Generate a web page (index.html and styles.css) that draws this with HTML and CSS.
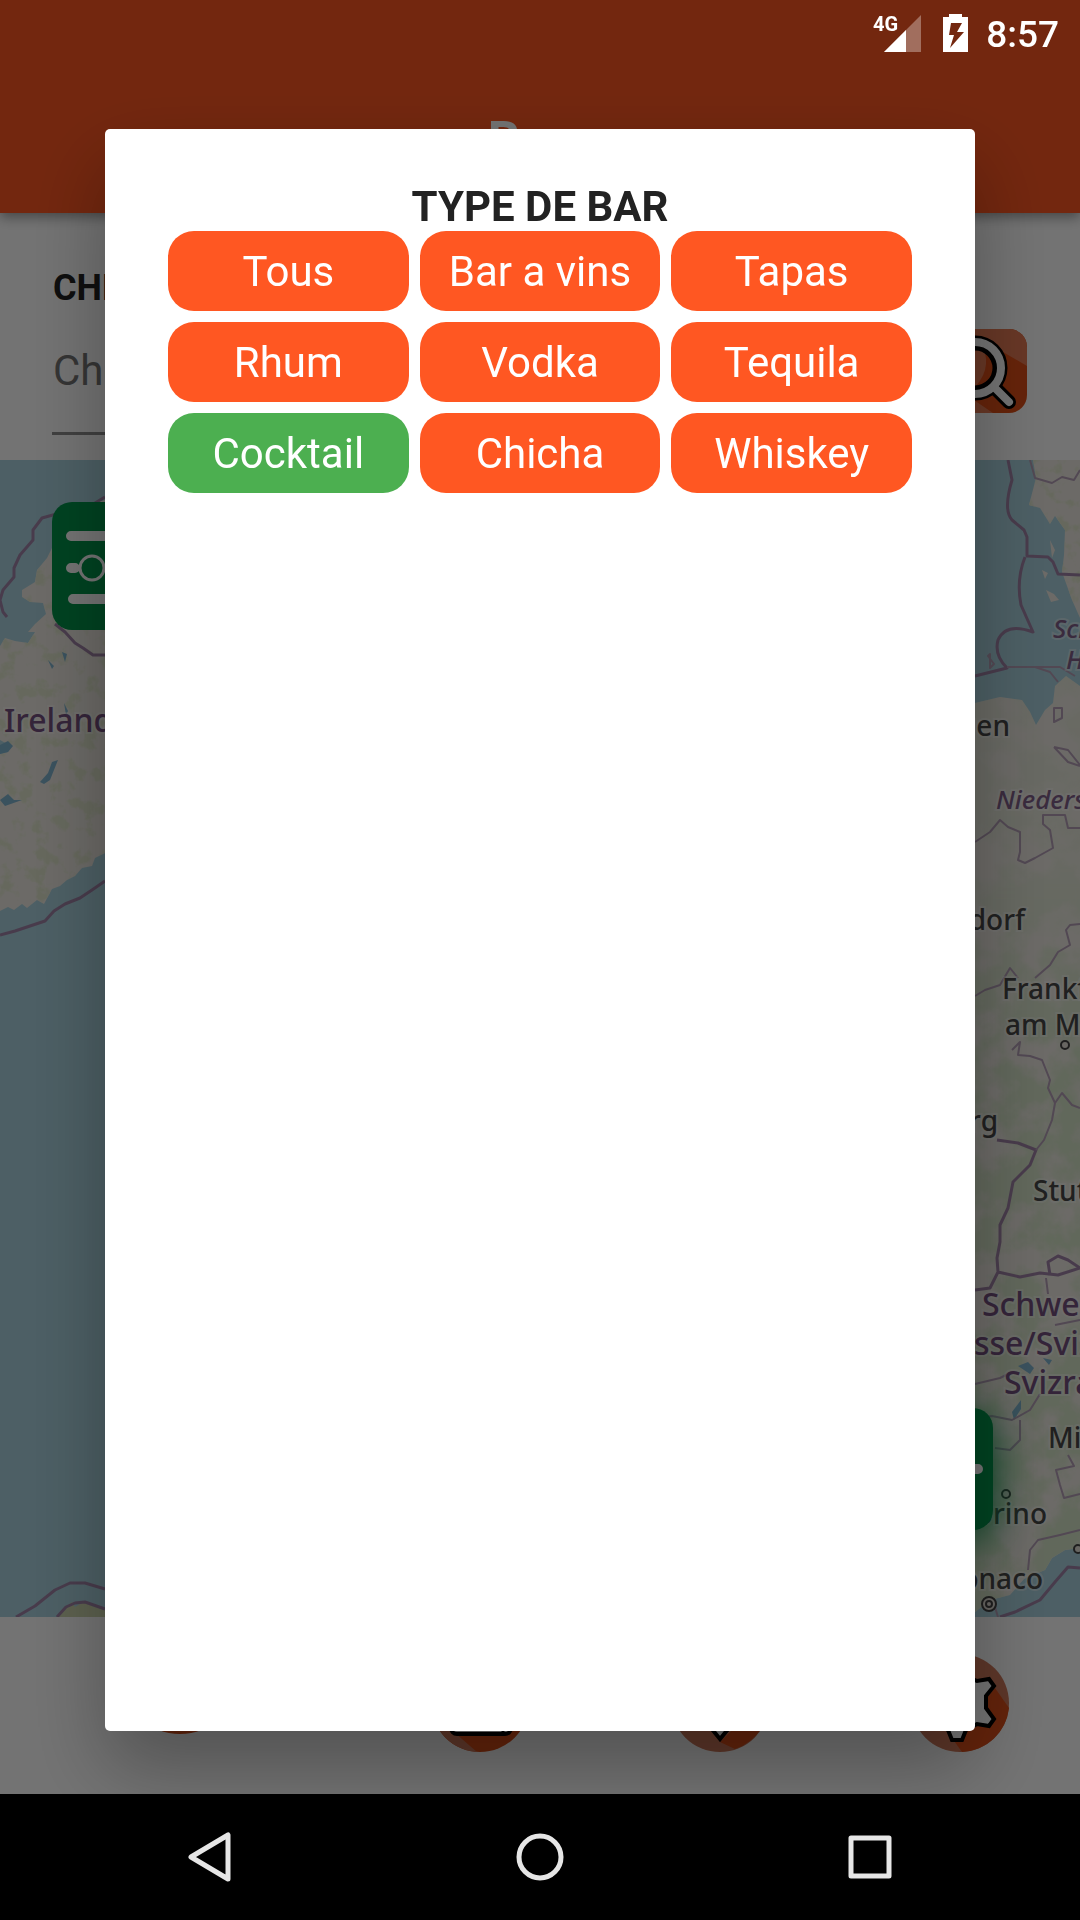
FILE: index.html
```html
<!DOCTYPE html>
<html lang="fr">
<head>
  <meta charset="utf-8">
  <meta name="viewport" content="width=device-width, initial-scale=1">
  <title>Bars</title>
  <link rel="stylesheet" href="styles.css">
</head>
<body>
  <div class="status-bar">
    <div class="signal">
      <span class="network">4G</span>
      <svg class="signal-icon" viewBox="0 0 37 37" aria-hidden="true">
        <path d="M37 0V37H0Z" fill="#fff" fill-opacity=".33"/>
        <path d="M22 15V37H0Z" fill="#fff"/>
      </svg>
    </div>
    <svg class="battery" viewBox="0 0 25 38" aria-hidden="true">
      <path fill="#fff" fill-rule="evenodd" d="M6 0H19V3H25V38H0V3H6ZM8 9L6 21H11L7 34L21 18H14L19 9Z"/>
    </svg>
    <time class="clock">8:57</time>
  </div>

  <div class="app">
    <header class="app-bar"><h1 class="app-title">Bars</h1></header>

    <form class="search">
      <div class="search-field">
        <label class="search-label" for="query">CHERCHER</label>
        <input class="search-input" id="query" type="text" placeholder="Chercher un bar">
      </div>
      <button class="search-button" type="button" aria-label="Rechercher">
        <svg viewBox="0 0 84 84" aria-hidden="true">
          <rect width="84" height="84" rx="18" fill="#e04f17"/>
          <path d="M0 18A18 18 0 0 1 18 0H66A18 18 0 0 1 84 18V37L0 -12Z" fill="#e57b55"/>
          <path d="M0 18L40 18Q50 42 28 62L0 84Z" fill="#e57b55"/>
          <path d="M18 84A18 18 0 0 1 0 66V50L50 84Z" fill="#e57b55"/>
          <g fill="none" stroke-linecap="round">
            <circle cx="32" cy="39" r="25" stroke="#000" stroke-width="15"/>
            <path d="M51 58L66 73" stroke="#000" stroke-width="14"/>
            <circle cx="32" cy="39" r="26" stroke="#fff" stroke-width="8"/>
            <path d="M51 58L66 73" stroke="#fff" stroke-width="8"/>
          </g>
        </svg>
      </button>
    </form>

    <main class="map">
      <svg class="map-canvas" viewBox="0 460 1080 1157" preserveAspectRatio="xMidYMid slice" role="img" aria-label="Carte">
        <defs>
          <filter id="woods" x="0" y="0" width="1" height="1">
            <feTurbulence type="fractalNoise" baseFrequency=".024" numOctaves="5" seed="8"/>
            <feColorMatrix values="0 0 0 0 .69  0 0 0 0 .79  0 0 0 0 .6  4 0 0 0 -1.4"/>
            <feComposite in2="SourceGraphic" operator="in"/>
          </filter>
          <filter id="meadows" x="0" y="0" width="1" height="1">
            <feTurbulence type="fractalNoise" baseFrequency=".06" numOctaves="4" seed="3"/>
            <feColorMatrix values="0 0 0 0 .76  0 0 0 0 .8  0 0 0 0 .62  6 0 0 0 -3.2"/>
            <feComposite in2="SourceGraphic" operator="in"/>
          </filter>
          <linearGradient id="relief" x1="0" y1="0" x2="0" y2="1">
            <stop offset="0" stop-color="#fff" stop-opacity=".3"/>
            <stop offset=".2" stop-color="#fff" stop-opacity=".4"/>
            <stop offset=".4" stop-color="#fff"/>
          </linearGradient>
          <path id="ireland" d="M105 500L60 510L52 548L47 558L37 570L35 582L22 590V597L30 602L43 603L46 614L35 624L28 632H35L28 643L15 641L5 638L0 646V740L11 746L8 752L0 754V911L8 907L14 910L22 904L27 908L37 900L44 904L52 889L60 886L67 880L75 876L82 868L92 866L95 858L105 853Z"/>
          <path id="denmark" d="M1033 460L1036 478L1029 505L1040 508L1050 524L1055 516L1065 530L1064 555L1062 572L1072 600L1080 618V460Z"/>
          <path id="continent" d="M940 710L975 703L1000 697L1022 700L1030 712L1036 725L1045 710L1053 703L1055 686L1066 676L1080 686V1548L1065 1550L1052 1558L1045 1570L1025 1578L1010 1595L990 1600L975 1612L960 1617H900V710Z"/>
        </defs>
        <rect y="460" width="1080" height="1157" fill="#aad3df"/>
        <g fill="#efebe4">
          <use href="#ireland"/>
          <use href="#denmark"/>
          <use href="#continent"/>
          <path d="M1046 590l8 4 5 6-8 2zM1042 570l6 3-3 6zM1050 540l5 10-3 8z"/>
        </g>
        <use href="#ireland" filter="url(#meadows)"/>
        <use href="#denmark" filter="url(#meadows)"/>
        <use href="#continent" fill="url(#relief)" filter="url(#woods)"/>
        <path d="M57 1617L62 1610L66 1607L72 1602L75 1607L85 1601L92 1606L105 1610V1617Z" fill="#cdd6ae"/>
        <g fill="#82b5d0">
          <path d="M0 745L8 741L13 746L8 752L0 754ZM0 800L8 794L14 800L22 800L5 806ZM40 782L48 773L52 762L58 760L54 770L50 780L44 784ZM62 652l5 2-2 8zM48 660l6 6-2 3zM64 703l4 8-2 4z"/>
          <path d="M1018 1366L1028 1362L1034 1368L1030 1374ZM1043 1358l9 2-3 5zM1012 1412L1021 1400V1409L1014 1420Z"/>
        </g>
        <g fill="none" stroke="#a184a8" stroke-width="3" stroke-linejoin="round">
          <path d="M105 497L90 506L60 513L42 518L33 530V540L20 555L14 568V577L3 590L0 600L3 612L7 617"/>
          <path d="M55 624L65 632L75 643L83 648L93 655H105M0 935L15 931L30 926L45 921L54 911L65 904L80 898L92 890L105 881"/>
          <path d="M16 1617L35 1606L55 1590L70 1583H85L105 1589M57 1617L66 1607L75 1603L85 1602L105 1609"/>
          <path d="M1008 460L1012 480Q1003 510 1012 520L1024 530L1027 537V556L1048 557L1053 562L1058 574L1080 575M1025 557Q1016 580 1021 605L1033 632Q1006 622 998 640Q994 655 1007 668L975 676"/>
          <path d="M997 1140L1018 1143L1036 1150L1030 1165L1013 1182L1008 1208L1000 1225V1242L997 1258L998 1272L1020 1277L1040 1273L1058 1275L1080 1268M998 1272L990 1288L975 1290"/>
          <path d="M1050 1275L1048 1262L1058 1256L1068 1260L1080 1268M1080 1568L1068 1567L1055 1582L1040 1600L1015 1612L1000 1617"/>
        </g>
        <g fill="none" stroke="#b5a0b8" stroke-width="2" stroke-linejoin="round">
          <path d="M1030 460L1035 478L1052 483L1062 477L1074 480L1080 470M1007 667H1060L1075 676M1035 667L1050 672L1058 682M988 656L994 664L990 668V654Z"/>
          <path d="M975 842L990 832L1000 820L1008 827L1020 832V852L1018 860L1025 863L1035 858L1053 848L1050 830L1043 824V815L1065 815L1068 828H1080M1054 708H1062V718L1054 722ZM1054 747L1068 750L1080 765M1054 747L1068 762L1080 766"/>
          <path d="M975 996L985 990L1000 985L1010 968L1018 978M1035 978L1050 965L1058 952L1070 945L1066 930L1070 925L1080 924M1012 1050L1020 1042L1018 1055L1030 1056L1042 1060L1050 1080L1048 1088L1055 1103L1052 1120L1044 1140L1036 1150M1055 1103L1062 1093L1072 1105L1080 1108"/>
          <path d="M1046 1278L1048 1294M1080 1320L1055 1325M975 1384L1000 1378L1012 1372M975 1418L992 1416L1012 1420L1030 1410L1040 1394M1020 1420V1440L1010 1450L995 1448M1068 1455L1074 1466L1056 1470L1060 1485L1064 1498L1080 1494M1028 1570L1030 1550L1038 1540L1060 1535L1080 1530M998 1617L994 1604"/>
        </g>
        <g class="country">
          <text x="4" y="732">Ireland</text>
          <text x="982" y="1316">Schweiz/</text>
          <text x="974" y="1355">sse/Svizzera/</text>
          <text x="1004" y="1394">Svizra</text>
        </g>
        <g class="region">
          <text x="1053" y="638">Schleswig-</text>
          <text x="1066" y="669">Holstein</text>
          <text x="996" y="809">Niedersachsen</text>
        </g>
        <g class="city">
          <text x="1010" y="736" text-anchor="end">Groningen</text>
          <text x="1025" y="930" text-anchor="end">Düsseldorf</text>
          <text x="1002" y="999">Frankfurt</text>
          <text x="1005" y="1035">am Main</text>
          <text x="998" y="1131" text-anchor="end">Luxembourg</text>
          <text x="1033" y="1201">Stuttgart</text>
          <text x="1048" y="1448">Milano</text>
          <text x="1047" y="1524" text-anchor="end">Torino</text>
          <text x="1043" y="1589" text-anchor="end">Monaco</text>
        </g>
        <g fill="#e6e2da" stroke="#444" stroke-width="2">
          <circle cx="1065" cy="1045" r="4"/>
          <circle cx="1006" cy="1494" r="4"/>
          <circle cx="1078" cy="1549" r="4"/>
          <circle cx="989" cy="1604" r="7"/>
          <circle cx="989" cy="1604" r="3"/>
        </g>
      </svg>
      <button class="map-button filter-button" type="button" aria-label="Filtrer">
        <svg viewBox="0 0 128 128" fill="none" stroke="#fff" stroke-width="10" stroke-linecap="round" aria-hidden="true">
          <path d="M19 34H109M19 66H23M58 66H109M21 97H109"/>
          <circle cx="40" cy="66" r="12" stroke-width="3"/>
        </svg>
      </button>
      <button class="map-button add-button" type="button" aria-label="Ajouter">
        <svg viewBox="0 0 122 122" fill="none" stroke="#fff" stroke-width="10" stroke-linecap="round" aria-hidden="true">
          <path d="M17 61H107M61 15V105"/>
        </svg>
      </button>
    </main>

    <nav class="tabs">
      <a class="tab tab-main" href="#accueil" aria-label="Accueil">
        <svg viewBox="0 0 98 98" aria-hidden="true"><circle cx="49" cy="49" r="49" fill="#dc4e18"/></svg>
      </a>
      <a class="tab" href="#agenda" aria-label="Agenda">
        <svg viewBox="0 0 98 98" aria-hidden="true">
          <circle cx="49" cy="49" r="49" fill="#dc4e18"/>
          <path d="M6 72A49 49 0 0 0 46 98L16 72Z" fill="#d07a5c"/>
          <rect x="20" y="22" width="60" height="58" rx="6" fill="#fff" stroke="#000" stroke-width="4"/>
          <path d="M72 68V80" stroke="#000" stroke-width="3"/>
        </svg>
      </a>
      <a class="tab" href="#lieux" aria-label="Lieux">
        <svg viewBox="0 0 98 98" aria-hidden="true">
          <circle cx="49" cy="49" r="49" fill="#d07a5c"/>
          <path d="M49 88L64 95A49 49 0 0 0 97 40Z" fill="#dc4e18"/>
          <path d="M49 85L22 52A29 29 0 1 1 76 52Z" fill="#fff" stroke="#000" stroke-width="4"/>
        </svg>
      </a>
      <a class="tab" href="#reglages" aria-label="Réglages">
        <svg viewBox="0 0 98 98" aria-hidden="true">
          <circle cx="49" cy="49" r="49" fill="#d07a5c"/>
          <path d="M84 34L98 54A49 49 0 0 1 51 98L41 84Z" fill="#dc4e18"/>
          <path d="M40 9H52L55 22L66 27L78 25L83 32L75 42V54L83 65L78 72L66 70L55 76L51 86H41L37 76L26 70L14 72L9 65L17 54V42L9 32L14 25L26 27L37 22Z" fill="#fff" stroke="#000" stroke-width="4"/>
        </svg>
      </a>
    </nav>
  </div>

  <div class="backdrop">
    <section class="dialog" role="dialog" aria-modal="true" aria-labelledby="dialog-title">
      <h2 class="dialog-title" id="dialog-title">TYPE DE BAR</h2>
      <div class="types">
        <button class="type" type="button">Tous</button>
        <button class="type" type="button">Bar a vins</button>
        <button class="type" type="button">Tapas</button>
        <button class="type" type="button">Rhum</button>
        <button class="type" type="button">Vodka</button>
        <button class="type" type="button">Tequila</button>
        <button class="type type-selected" type="button" aria-pressed="true">Cocktail</button>
        <button class="type" type="button">Chicha</button>
        <button class="type" type="button">Whiskey</button>
      </div>
    </section>
  </div>

  <div class="system-nav">
    <button class="system-button" type="button" aria-label="Retour">
      <svg viewBox="0 0 50 50" aria-hidden="true"><path d="M43 3V47L6 25Z"/></svg>
    </button>
    <button class="system-button" type="button" aria-label="Accueil système">
      <svg viewBox="0 0 50 50" aria-hidden="true"><circle cx="25" cy="25" r="21"/></svg>
    </button>
    <button class="system-button" type="button" aria-label="Applications récentes">
      <svg viewBox="0 0 50 50" aria-hidden="true"><rect x="6" y="6" width="38" height="38"/></svg>
    </button>
  </div>
</body>
</html>
```
FILE: styles.css
```css
*,
*::before,
*::after {
  box-sizing: border-box;
}

body {
  --orange: #ff5722;
  --status-height: 63px;
  --system-nav-height: 126px;
  margin: 0;
  min-height: 100vh;
  display: flex;
  flex-direction: column;
  font-family: Roboto, "Noto Sans", sans-serif;
  background: #fff;
  color: #222;
}

button {
  border: 0;
  padding: 0;
  font: inherit;
  color: inherit;
  background: none;
}

svg {
  display: block;
}

/* System status bar, drawn over the dimmed page */
.status-bar {
  position: fixed;
  inset: 0 0 auto 0;
  z-index: 3;
  height: var(--status-height);
  padding: 14px 21px 8px 0;
  display: flex;
  justify-content: flex-end;
  align-items: flex-start;
  color: #fff;
}

.signal {
  display: flex;
  align-items: flex-start;
  margin-right: 22px;
}

.network {
  font-size: 20px;
  line-height: 20px;
  font-weight: 700;
  margin-right: -14px;
}

.signal-icon {
  width: 37px;
  height: 37px;
  margin-top: 1px;
}

.battery {
  width: 25px;
  height: 38px;
  margin-right: 18px;
}

.clock {
  font-size: 37px;
  line-height: 41px;
  font-weight: 500;
}

/* Page behind the dialog */
.app {
  flex: 1;
  display: flex;
  flex-direction: column;
}

.app-bar {
  position: relative;
  z-index: 1;
  height: 213px;
  padding-top: 68px;
  display: flex;
  align-items: center;
  justify-content: center;
  background: var(--orange);
  box-shadow: 0 4px 12px rgba(0, 0, 0, .4);
}

.app-title {
  margin: 0;
  font-size: 51px;
  line-height: 58px;
  color: #fff;
}

.search {
  height: 247px;
  padding: 53px 53px 25px 52px;
  display: flex;
  align-items: center;
  gap: 32px;
}

.search-field {
  flex: 1;
  display: flex;
  flex-direction: column;
}

.search-label {
  padding-left: 1px;
  font-size: 36px;
  line-height: 45px;
  font-weight: 700;
}

.search-input {
  height: 124px;
  padding: 0 0 3px 1px;
  border: 0;
  border-bottom: 3px solid #8e8e8e;
  border-radius: 0;
  font: 42px/49px Roboto, "Noto Sans", sans-serif;
  color: #222;
  background: none;
}

.search-input::placeholder {
  color: #757575;
  opacity: 1;
}

.search-button {
  width: 84px;
  height: 84px;
  margin-top: 40px;
}

.map {
  position: relative;
  flex: 1;
  min-height: 600px;
}

.map-canvas {
  position: absolute;
  width: 100%;
  height: 100%;
}

.map text {
  font-family: "Noto Sans", sans-serif;
  font-weight: 500;
  paint-order: stroke;
  stroke: rgba(255, 255, 255, .4);
  stroke-width: 4px;
}

.country {
  font-size: 32px;
  fill: #74507f;
}

.region {
  font-size: 26px;
  font-style: italic;
  fill: #80608a;
}

.city {
  font-size: 28px;
  fill: #484848;
}

.map-button {
  position: absolute;
  border-radius: 20px;
  background: #00944a;
}

.filter-button {
  top: 42px;
  left: 52px;
  width: 128px;
  height: 128px;
}

.add-button {
  right: 87px;
  bottom: 87px;
  width: 122px;
  height: 122px;
  box-shadow: 0 8px 40px #00944a;
}

.tabs {
  height: 177px;
  padding-bottom: 42px;
  display: grid;
  grid-template-columns: 3fr 2fr 2fr 2fr;
  align-items: end;
  justify-items: center;
}

.tab {
  width: 98px;
}

.tab-main {
  width: 114px;
  padding-bottom: 18px;
}

.backdrop {
  position: fixed;
  inset: 0 0 var(--system-nav-height) 0;
  z-index: 2;
  padding: 129px 105px 63px;
  display: flex;
  background: rgba(0, 0, 0, .55);
}

.dialog {
  flex: 1;
  padding: 53px 63px;
  border-radius: 5px;
  background: #fff;
  box-shadow: 0 36px 80px rgba(0, 0, 0, .3);
}

.dialog-title {
  margin: 0;
  font-size: 42px;
  line-height: 49px;
  text-align: center;
}

.types {
  display: grid;
  grid-template-columns: repeat(3, 1fr);
  gap: 11px;
}

.type {
  height: 80px;
  border-radius: 26px;
  font-size: 42px;
  line-height: 49px;
  color: #fff;
  background: var(--orange);
}

.type-selected {
  background: #4caf50;
}

/* System navigation */
.system-nav {
  position: sticky;
  bottom: 0;
  z-index: 3;
  height: var(--system-nav-height);
  padding: 0 45px;
  display: grid;
  grid-template-columns: repeat(3, 1fr);
  place-items: center;
  background: #000;
}

.system-button {
  width: 50px;
  height: 50px;
}

.system-button svg {
  fill: none;
  stroke: #e6e6e6;
  stroke-width: 5px;
  stroke-linejoin: round;
}
```
